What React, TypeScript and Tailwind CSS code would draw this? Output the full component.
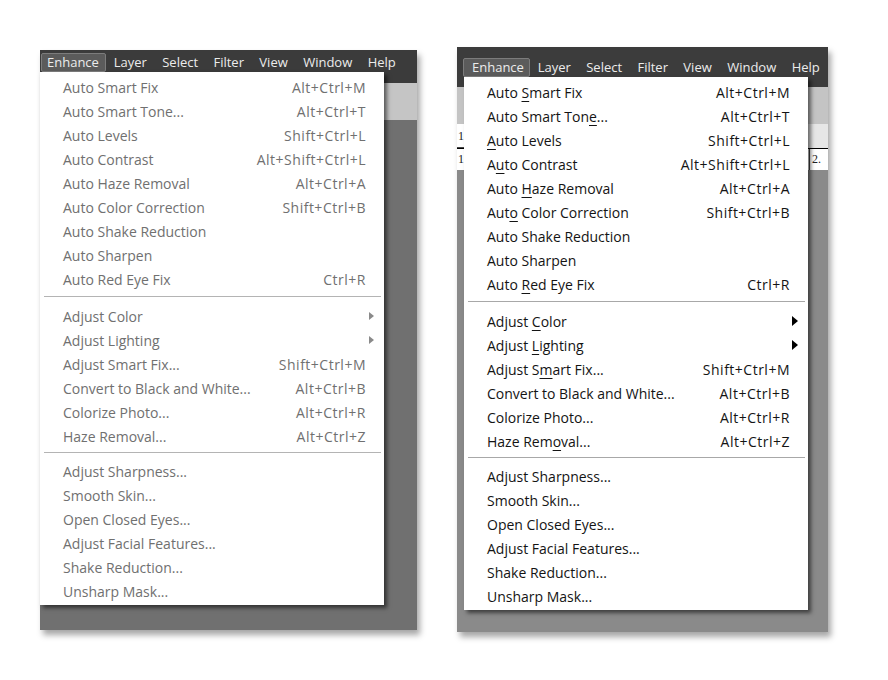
import React from 'react';

type Item =
  | { kind: 'item'; label: string; u?: number; shortcut?: string; arrow?: boolean }
  | { kind: 'sep'; h: string };

// u = index of the underlined mnemonic letter
const ITEMS: Item[] = [
  { kind: 'item', label: 'Auto Smart Fix', u: 5, shortcut: 'Alt+Ctrl+M' },
  { kind: 'item', label: 'Auto Smart Tone...', u: 14, shortcut: 'Alt+Ctrl+T' },
  { kind: 'item', label: 'Auto Levels', u: 0, shortcut: 'Shift+Ctrl+L' },
  { kind: 'item', label: 'Auto Contrast', u: 1, shortcut: 'Alt+Shift+Ctrl+L' },
  { kind: 'item', label: 'Auto Haze Removal', u: 5, shortcut: 'Alt+Ctrl+A' },
  { kind: 'item', label: 'Auto Color Correction', u: 3, shortcut: 'Shift+Ctrl+B' },
  { kind: 'item', label: 'Auto Shake Reduction' },
  { kind: 'item', label: 'Auto Sharpen' },
  { kind: 'item', label: 'Auto Red Eye Fix', u: 5, shortcut: 'Ctrl+R' },
  { kind: 'sep', h: 'h-[13px] pt-[5px]' },
  { kind: 'item', label: 'Adjust Color', u: 7, arrow: true },
  { kind: 'item', label: 'Adjust Lighting', u: 7, arrow: true },
  { kind: 'item', label: 'Adjust Smart Fix...', u: 8, shortcut: 'Shift+Ctrl+M' },
  { kind: 'item', label: 'Convert to Black and White...', shortcut: 'Alt+Ctrl+B' },
  { kind: 'item', label: 'Colorize Photo...', shortcut: 'Alt+Ctrl+R' },
  { kind: 'item', label: 'Haze Removal...', u: 8, shortcut: 'Alt+Ctrl+Z' },
  { kind: 'sep', h: 'h-[11px] pt-[4px]' },
  { kind: 'item', label: 'Adjust Sharpness...' },
  { kind: 'item', label: 'Smooth Skin...' },
  { kind: 'item', label: 'Open Closed Eyes...' },
  { kind: 'item', label: 'Adjust Facial Features...' },
  { kind: 'item', label: 'Shake Reduction...' },
  { kind: 'item', label: 'Unsharp Mask...' },
];

const BAR = ['Layer', 'Select', 'Filter', 'View', 'Window', 'Help'];

function Label({ text, u, enabled }: { text: string; u?: number; enabled: boolean }) {
  if (!enabled || u === undefined) return <span>{text}</span>;
  return (
    <span>
      {text.slice(0, u)}
      <span className="underline underline-offset-[3px] decoration-1">{text[u]}</span>
      {text.slice(u + 1)}
    </span>
  );
}

function Dropdown({ enabled }: { enabled: boolean }) {
  const color = enabled ? 'text-[#141414]' : 'text-[#707070]';
  return (
    <div
      className={`w-[344px] bg-white pt-[3px] pb-[2px] shadow-[3px_3px_4px_rgba(0,0,0,0.55)] text-[14px] ${color}`}
    >
      {ITEMS.map((it, i) =>
        it.kind === 'sep' ? (
          <div key={i} className={it.h}>
            <div className={`ml-[4px] mr-[3px] h-px ${enabled ? 'bg-[#a8a8a8]' : 'bg-[#b4b4b4]'}`} />
          </div>
        ) : (
          <div
            key={i}
            className={`h-[24px] flex items-center justify-between pl-[23px] ${it.arrow ? 'pr-[10px]' : 'pr-[18px]'}`}
          >
            <Label text={it.label} u={it.u} enabled={enabled} />
            {it.shortcut && <span className="tracking-[0.5px]">{it.shortcut}</span>}
            {it.arrow &&
              (enabled ? (
                <svg width="6" height="10" viewBox="0 0 6 10">
                  <path d="M0 0 L6 5 L0 10 Z" fill="#000" />
                </svg>
              ) : (
                <svg width="5" height="8" viewBox="0 0 5 8">
                  <path d="M0 0 L5 4 L0 8 Z" fill="#8a8a8a" />
                </svg>
              ))}
          </div>
        )
      )}
    </div>
  );
}

function MenuBar({ enabled }: { enabled: boolean }) {
  return (
    <div className={`flex items-start text-[13px] text-[#ececec] ${enabled ? 'pt-[11px] pl-[6px]' : 'pt-[3px] pl-[1px]'}`}>
      <div
        className={`h-[19px] leading-[17px] border border-[#7c7c7c] bg-[#5b5b5b] rounded-[2px] ${enabled ? 'w-[67px] pl-[8px]' : 'w-[65px] pl-[5px]'}`}
      >
        Enhance
      </div>
      <div className="flex">
        {BAR.map((b) => (
          <div key={b} className="h-[19px] leading-[19px] px-[7.7px]">
            {b}
          </div>
        ))}
      </div>
    </div>
  );
}

function LeftPanel() {
  return (
    <div className="relative w-[377px] h-[580px] mt-[50px] bg-[#707070] shadow-[3px_5px_6px_rgba(0,0,0,0.35)] flex flex-col">
      <div className="h-[33px] bg-[#3b3b3b]">
        <MenuBar enabled={false} />
      </div>
      <div className="h-[37px] bg-[#c5c5c5]" />
      <div className="absolute left-0 top-[22px]">
        <Dropdown enabled={false} />
      </div>
    </div>
  );
}

function RightPanel() {
  return (
    <div className="relative w-[371px] h-[585px] mt-[47px] ml-[40px] bg-[#8a8a8a] shadow-[3px_5px_6px_rgba(0,0,0,0.35)] flex flex-col">
      <div className="h-[40px] bg-[#3c3c3c]">
        <MenuBar enabled />
      </div>
      <div className="h-[37px] bg-[#c4c4c4]" />
      <div className="h-[24px] bg-[#e6e6e6] flex text-[12px] text-[#222]" style={{ fontFamily: '"Liberation Serif", serif' }}>
        <div className="w-[7px] bg-white border-b border-[#444] leading-[24px] pl-[1px]">1</div>
      </div>
      <div className="h-[22px] bg-white border-t border-black flex justify-between text-[12px] text-[#222]" style={{ fontFamily: '"Liberation Serif", serif' }}>
        <div className="w-[7px] leading-[20px] pl-[1px]">1</div>
        <div className="w-[19px] leading-[20px] pl-[2px] border-l border-[#444]">2.</div>
      </div>
      <div className="absolute left-[7px] top-[30px]">
        <Dropdown enabled />
      </div>
    </div>
  );
}

export default function App() {
  return (
    <div className="w-[888px] h-[680px] bg-white flex items-start pl-[40px] font-['Open_Sans',sans-serif]">
      <LeftPanel />
      <RightPanel />
    </div>
  );
}
